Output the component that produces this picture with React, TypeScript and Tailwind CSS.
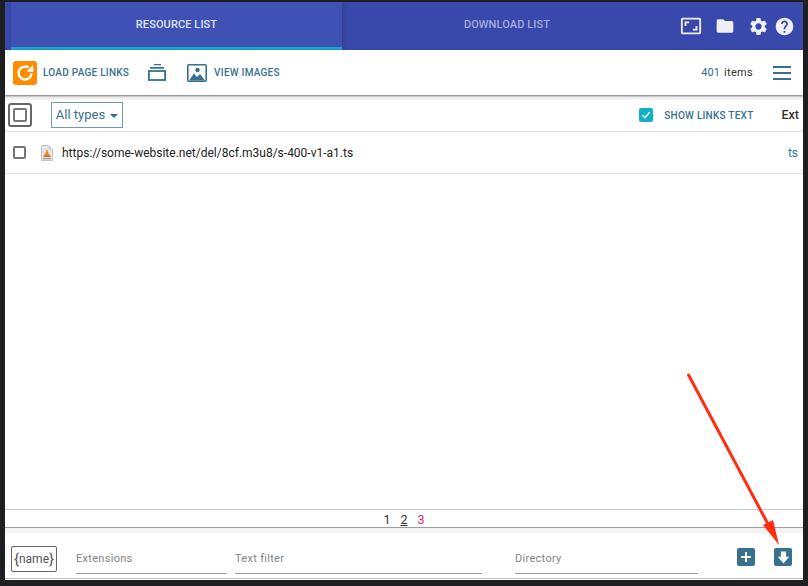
import { MdAspectRatio, MdFolder, MdHelp, MdSettings } from "react-icons/md";

const TEAL = "text-[#37718f]";

function LoadIcon() {
	return (
		<svg width="24" height="24" viewBox="0 0 24 24" className="shrink-0">
			<rect width="24" height="24" rx="3" fill="#ff8c00" />
			<path d="M18.500 12.500a6.500 6.500 0 1 1-3-6" fill="none" stroke="#fff" strokeWidth="2.400" />
			<path d="M13.500 10.500 20.500 11 20 4Z" fill="#fff" />
		</svg>
	);
}

function StackIcon() {
	return (
		<svg width="18" height="17" viewBox="0 0 18 17" className="text-[#37718f]">
			<path d="M6 0h7v1.300H6zM2 3h14v1.700H2z" fill="currentColor" />
			<rect x="0.900" y="7" width="16.200" height="9" fill="none" stroke="currentColor" strokeWidth="1.800" />
		</svg>
	);
}

function ImagesIcon() {
	return (
		<svg width="20" height="18" viewBox="0 0 20 18" className="text-[#37718f]">
			<rect x="0.800" y="0.800" width="18.400" height="16.400" rx="1" fill="none" stroke="currentColor" strokeWidth="1.600" />
			<circle cx="10.500" cy="6" r="2.200" fill="currentColor" />
			<path d="M2 16.500 7 9.500 10 13 13 10 18 16.500Z" fill="currentColor" />
		</svg>
	);
}

function FileIcon() {
	return (
		<svg width="12" height="16" viewBox="0 0 12 16" className="shrink-0">
			<path d="M0.500 0.500h7l4 4v11h-11z" fill="#e8e6e4" stroke="#c4c4c4" />
			<path d="M7.500 0.500v4h4z" fill="#cfcfcf" />
			<path d="M6 4 8.500 10.500h-5z" fill="#f08a24" />
			<path d="M2.500 10.300h7v1.700h-7z" fill="#d9691a" />
			<rect x="2" y="13" width="8" height="1.200" fill="#9a9a9a" />
		</svg>
	);
}

function SquareButton({ children }: { children: React.ReactNode }) {
	return (
		<div className="flex h-[18px] w-[18px] items-center justify-center rounded-[2px] bg-[#37718f]">
			{children}
		</div>
	);
}

function FooterInput({ label, className }: { label: string; className: string }) {
	return (
		<div className={`flex h-[30px] items-end border-b border-[#9e9e9e] pb-[6px] text-[11px] leading-[16px] tracking-[0.3px] text-[#858585] ${className}`}>
			{label}
		</div>
	);
}

export default function App() {
	return (
		<div className="relative flex h-[586px] w-[808px] flex-col overflow-hidden bg-[#1f1f21] pl-[5px] pr-[5px] pt-[2px] font-['Roboto',sans-serif]">
			{/* Tabs */}
			<div className="flex h-[48px] shrink-0 bg-[#3949ab] pl-[6px]">
				<div className="flex h-full w-[331px] items-center justify-center border-b-[3px] border-[#17a5c4] bg-[#3f51b5] pt-[2px] text-[11px] font-medium tracking-[0.1px] text-[#dfe2f3] shadow-[2px_0_6px_rgba(0,0,0,0.15)]">
					RESOURCE LIST
				</div>
				<div className="flex h-full w-[330px] items-center justify-center pb-[1px] text-[11px] font-medium tracking-[0.1px] text-[#a3acdb]">
					DOWNLOAD LIST
				</div>
				<div className="flex flex-1 items-center pl-[8px] text-[#efeff9]">
					<MdAspectRatio size={22} />
					<MdFolder size={20} className="ml-[13px]" />
					<MdSettings size={21} className="ml-[13px]" />
					<MdHelp size={21} className="ml-[5px]" />
				</div>
			</div>

			{/* Toolbar */}
			<div className="z-10 flex h-[45px] shrink-0 items-center bg-white pl-[8px] pr-[12px] shadow-[0_1px_2px_rgba(0,0,0,0.55)]">
				<LoadIcon />
				<span className={`ml-[6px] text-[10px] font-medium tracking-[0.25px] ${TEAL}`}>LOAD PAGE LINKS</span>
				<div className="ml-[19px] flex"><StackIcon /></div>
				<div className="ml-[21px] flex"><ImagesIcon /></div>
				<span className={`ml-[7px] text-[10px] font-medium tracking-[0.25px] ${TEAL}`}>VIEW IMAGES</span>
				<span className={`ml-auto mt-[1px] text-[11px] tracking-[0.1px] ${TEAL}`}>401</span>
				<span className="ml-[4px] mt-[1px] text-[11px] tracking-[0.3px] text-[#333]">items</span>
				<div className="ml-[20px] flex w-[18px] flex-col gap-[4px]">
					<div className="h-[2px] bg-[#37718f]" />
					<div className="h-[2px] bg-[#37718f]" />
					<div className="h-[2px] bg-[#37718f]" />
				</div>
			</div>
			<div className="h-[5px] shrink-0 bg-[#f3f3f3]" />

			{/* List */}
			<div className="flex flex-1 flex-col bg-white">
				<div className="flex h-[32px] shrink-0 items-center border-b border-[#e0e0e0] pb-[1px] pl-[3px] pr-[4px]">
					<div className="flex h-[24px] w-[24px] items-center justify-center rounded-[3px] border-2 border-[#666]">
						<div className="h-[14px] w-[14px] rounded-[2px] border-2 border-[#777]" />
					</div>
					<div className={`ml-[19px] flex h-[26px] w-[72px] items-center justify-center gap-[5px] border border-[#6f9cb5] text-[13px] ${TEAL}`}>
						All types
						<div className="mt-[1px] h-0 w-0 border-x-[4.500px] border-t-[4.500px] border-x-transparent border-t-[#37718f]" />
					</div>
					<div className="ml-auto flex h-[14px] w-[14px] items-center justify-center rounded-[2px] bg-[#12afc9]">
						<svg width="10" height="10" viewBox="0 0 11 11">
							<path d="M1.500 5.800 4.300 8.500 9.500 2.500" fill="none" stroke="#fff" strokeWidth="1.500" />
						</svg>
					</div>
					<span className={`ml-[11px] text-[10px] font-medium tracking-[0.25px] ${TEAL}`}>SHOW LINKS TEXT</span>
					<span className="ml-[28px] text-[12.500px] font-medium text-[#333]">Ext</span>
				</div>
				<div className="flex h-[42px] shrink-0 items-center border-b border-[#e0e0e0] pl-[8px] pr-[5px]">
					<div className="h-[13px] w-[13px] rounded-[2px] border-2 border-[#757575]" />
					<div className="ml-[15px] flex"><FileIcon /></div>
					<span className="ml-[9px] text-[12px] text-[#222]">https://some-website.net/del/8cf.m3u8/s-400-v1-a1.ts</span>
					<span className="ml-auto text-[12px] text-[#2f78a3]">ts</span>
				</div>
				<div className="flex-1" />
				{/* Pagination */}
				<div className="flex h-[19px] shrink-0 items-center justify-center gap-[10px] border-y border-t-[#c3ccd6] border-b-[#9e9e9e] pt-[3px] text-[12.500px]">
					<span className="text-[#333]">1</span>
					<span className="text-[#333] underline">2</span>
					<span className="text-[#e91e63]">3</span>
				</div>
				<div className="h-[5px] shrink-0 bg-[#f3f3f3]" />
				{/* Footer */}
				<div className="flex h-[46px] shrink-0 items-start border-b border-[#bdbdbd] pl-[6px] pr-[11px]">
					<div className="mt-[13px] flex h-[26px] w-[46px] items-center justify-center rounded-[2px] border border-[#666] text-[#555]">
						<span className="text-[15px] leading-none">{"{"}</span>
						<span className="text-[12px]">name</span>
						<span className="text-[15px] leading-none">{"}"}</span>
					</div>
					<FooterInput label="Extensions" className="ml-[19px] mt-[11px] w-[151px]" />
					<FooterInput label="Text filter" className="ml-[8px] mt-[11px] w-[247px]" />
					<FooterInput label="Directory" className="ml-[33px] mt-[11px] w-[183px]" />
					<div className="ml-auto mt-[15px] flex gap-[19px]">
						<SquareButton>
							<svg width="12" height="12" viewBox="0 0 12 12"><path d="M5 1h2v4h4v2H7v4H5V7H1V5h4z" fill="#fff" /></svg>
						</SquareButton>
						<SquareButton>
							<svg width="13" height="13" viewBox="0 0 12 12.500"><path d="M3.500 0.500h5v5H11.500L6 12 .5 5.500h3z" fill="#fff" /></svg>
						</SquareButton>
					</div>
				</div>
				<div className="h-[1px] shrink-0" />
			</div>
			<div className="h-[6px] shrink-0 bg-[#1f1f21]" />

			{/* Red annotation arrow */}
			<svg className="absolute left-0 top-0" width="808" height="586" viewBox="0 0 808 586">
				<path d="M688 374 769 526" stroke="#ff2d12" strokeWidth="3" fill="none" />
				<path d="M779 545 763 525 773 520Z" fill="#ff2d12" />
			</svg>
		</div>
	);
}
